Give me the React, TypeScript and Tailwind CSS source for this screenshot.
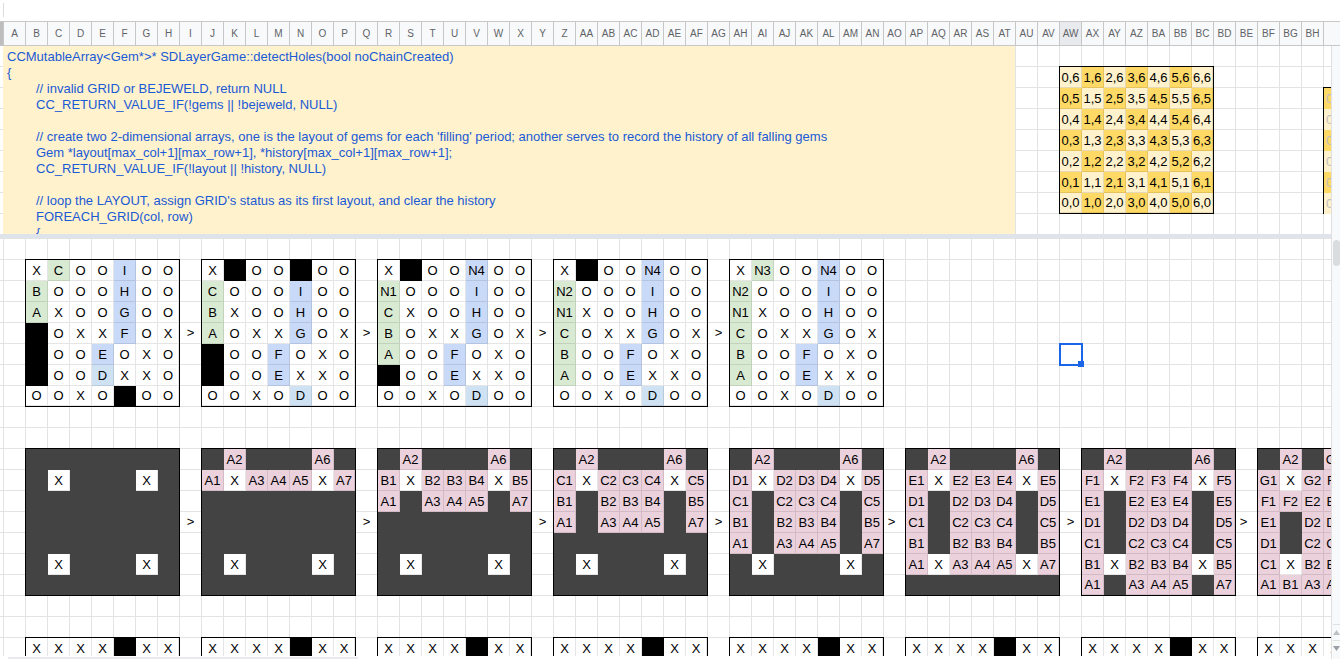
import React from "react";

const letters = "ABCDEFGHIJKLMNOPQRSTUVWXYZ";
const columns = [
  ...letters.split(""),
  ...letters.split("").map((l) => "A" + l),
  ..."ABCDEFGH".split("").map((l) => "B" + l),
];

const code = [
  { text: "CCMutableArray<Gem*>* SDLayerGame::detectHoles(bool noChainCreated)" },
  { text: "{" },
  { text: "// invalid GRID or BEJEWELD, return NULL", indent: true },
  { text: "CC_RETURN_VALUE_IF(!gems || !bejeweld, NULL)", indent: true },
  { text: "" },
  { text: "// create two 2-dimensional arrays, one is the layout of gems for each 'filling' period; another serves to record the history of all falling gems", indent: true },
  { text: "Gem *layout[max_col+1][max_row+1], *history[max_col+1][max_row+1];", indent: true },
  { text: "CC_RETURN_VALUE_IF(!layout || !history, NULL)", indent: true },
  { text: "" },
  { text: "// loop the LAYOUT, assign GRID's status as its first layout, and clear the history", indent: true },
  { text: "FOREACH_GRID(col, row)", indent: true },
  { text: "{", indent: true },
];

// token: "#" black, "." dark, "g:" green, "b:" blue, "l:" light blue, "p:" pink, "y:" gold, "c:" cream
const fills: Record<string, string> = {
  g: "bg-[#d9ead3]",
  b: "bg-[#c9daf8]",
  l: "bg-[#cfe2f3]",
  p: "bg-[#ead1dc]",
  y: "bg-[#ffd966]",
  c: "bg-[#fff2cc]",
};

const fallA = [
  "X g:C O O b:I O O",
  "g:B O O O b:H O O",
  "g:A X O O b:G O O",
  "# O X X b:F O X",
  "# O O b:E O X O",
  "# O O l:D X X O",
  "O O X O # O O",
];
const fallB = [
  "X # O O # O O",
  "g:C O O O b:I O O",
  "g:B X O O b:H O O",
  "g:A O X X b:G O X",
  "# O O b:F O X O",
  "# O O b:E X X O",
  "O O X O l:D O O",
];
const fallC = [
  "X # O O b:N4 O O",
  "g:N1 O O O b:I O O",
  "g:C X O O b:H O O",
  "g:B O X X b:G O X",
  "g:A O O b:F O X O",
  "# O O b:E X X O",
  "O O X O l:D O O",
];
const fallD = [
  "X # O O b:N4 O O",
  "g:N2 O O O b:I O O",
  "g:N1 X O O b:H O O",
  "g:C O X X b:G O X",
  "g:B O O b:F O X O",
  "g:A O O b:E X X O",
  "O O X O l:D O O",
];
const fallE = ["X g:N3 O O b:N4 O O", ...fallD.slice(1)];

const dark = ". . . . . . .";
const holes = ". X . . . X .";
const top = ". p:A2 . . . p:A6 .";
const row = (n: string, mid: string) => `p:${n}1 ${mid} p:${n}2 p:${n}3 p:${n}4 ${mid} p:${n}5`;
const base = (mid: string) => `p:A1 ${mid} p:A3 p:A4 p:A5 ${mid} p:A7`;

const fillA = [dark, holes, dark, dark, dark, holes, dark];
const fillB = [top, base("X"), dark, dark, dark, holes, dark];
const fillC = [top, row("B", "X"), base("."), dark, dark, holes, dark];
const fillD = [top, row("C", "X"), row("B", "."), base("."), dark, holes, dark];
const fillE = [top, row("D", "X"), row("C", "."), row("B", "."), base("."), holes, dark];
const fillF = [top, row("E", "X"), row("D", "."), row("C", "."), row("B", "."), base("X"), dark];
const fillG = [top, row("F", "X"), row("E", "."), row("D", "."), row("C", "."), row("B", "X"), base(".")];
const fillH = [
  ". p:A2 . p:G3 p:G4 p:A6 .",
  "p:G1 X p:G2 p:F3 p:F4 X p:G5",
  "p:F1 p:F2 p:E2 p:E3 p:E4 . p:F5",
  "p:E1 . p:D2 p:D3 p:D4 . p:E5",
  "p:D1 . p:C2 p:C3 p:C4 . p:D5",
  "p:C1 X p:B2 p:B3 p:B4 X p:C5",
  "p:A1 p:B1 p:A3 p:A4 p:A5 p:B5 p:A7",
];

const fallRow = [fallA, fallB, fallC, fallD, fallE];
const fillRow = [fillA, fillB, fillC, fillD, fillE, fillF, fillG, fillH];
const blocked = ["X X X X # X X"];

const coords = Array.from({ length: 7 }, (_, i) =>
  Array.from({ length: 7 }, (_, col) => `${(col + 6 - i) % 2 ? "y" : "c"}:${col},${6 - i}`).join(" ")
);

function Cell({ token }: { token: string }) {
  if (token === "#") return <div className="bg-black" />;
  if (token === ".") return <div className="bg-[#434343]" />;
  const tinted = token.includes(":");
  const fill = tinted ? fills[token[0]] : "bg-white";
  const label = tinted ? token.slice(2) : token;
  return (
    <div className={`flex items-center justify-center whitespace-nowrap border-r border-b border-black/10 pt-px ${fill}`}>
      {label}
    </div>
  );
}

function Board({ rows }: { rows: string[] }) {
  return (
    <div className="grid h-[148px] w-[155px] shrink-0 grid-cols-[repeat(6,22px)_21px] grid-rows-[repeat(6,21px)_20px] border border-black bg-white text-[13px] text-black">
      {rows.flatMap((r, y) => r.split(" ").map((t, x) => <Cell key={`${y}-${x}`} token={t} />))}
    </div>
  );
}

function Separator({ shifted }: { shifted?: boolean }) {
  return (
    <div
      className={`flex w-[21px] shrink-0 items-center justify-center text-[13px] text-black ${
        shifted ? "pr-[6px]" : ""
      }`}
    >
      {">"}
    </div>
  );
}

function BoardRow({ boards, shifted = [] }: { boards: string[][]; shifted?: number[] }) {
  return (
    <div className="flex">
      {boards.map((rows, i) => (
        <React.Fragment key={i}>
          {i > 0 && <Separator shifted={shifted.includes(i)} />}
          <Board rows={rows} />
        </React.Fragment>
      ))}
    </div>
  );
}

export default function App() {
  const gridLines =
    "bg-[linear-gradient(to_right,#e2e3e3_1px,transparent_1px),linear-gradient(to_bottom,#e2e3e3_1px,transparent_1px)] bg-[size:22px_21px]";

  return (
    <div className="flex h-[659px] w-[1340px] flex-col overflow-hidden bg-white font-['Liberation_Sans',Arial,sans-serif]">
      {/* Toolbar edge */}
      <div className="h-[21px] shrink-0 pl-[3px] pt-[3px]">
        <div className="h-[14px] w-px bg-[#dadce0]" />
      </div>

      {/* Column headers */}
      <div className="flex h-[25px] shrink-0 border-y border-[#c7c7c7] bg-[#f8f9fa]">
        <div className="w-[3px] shrink-0 bg-[#bdbdbd]" />
        {columns.map((name) => (
          <div
            key={name}
            className={`flex w-[22px] shrink-0 items-center justify-center border-l border-[#c7c7c7] text-[10px] text-[#5f6368] ${
              name === "AW" ? "bg-[#e8eaed]" : ""
            }`}
          >
            {name}
          </div>
        ))}
        <div className="flex-1 border-l border-[#c7c7c7]" />
      </div>

      <div className="flex min-h-0 flex-1">
        <div className="flex w-[1331px] shrink-0 flex-col">
          {/* Frozen rows */}
          <div className={`flex h-[188px] shrink-0 overflow-hidden pl-[3px] bg-[position:3px_-1px] ${gridLines}`}>
            <div className="h-full w-[1012px] shrink-0 overflow-hidden bg-[#fff2cc] px-[4px] pt-[3px] text-[13px] leading-[16px] text-[#1a5ad6]">
              {code.map((l, i) => (
                <div key={i} className={`h-[16px] whitespace-nowrap ${l.indent ? "pl-[29px]" : ""}`}>
                  {l.text}
                </div>
              ))}
            </div>
            <div className="ml-[44px] mt-[20px] shrink-0">
              <Board rows={coords} />
            </div>
            <div className="ml-[109px] mt-[41px] h-[127px] w-[20px] shrink-0 border-l border-t border-black">
              {["y", "c", "y", "c", "y", "c"].map((t, i) => (
                <div
                  key={i}
                  className={`flex h-[21px] items-center pl-[2px] text-[13px] text-[#bdbdbd] ${fills[t]}`}
                >
                  0
                </div>
              ))}
            </div>
          </div>

          {/* Freeze bar */}
          <div className="h-[4px] shrink-0 bg-[#dfe3ea]" />

          {/* Scrolling rows */}
          <div className={`relative min-h-0 flex-1 overflow-hidden bg-[position:3px_0] pl-[25px] pt-[21px] ${gridLines}`}>
            <div className="flex flex-col gap-[41px]">
              <BoardRow boards={fallRow} />
              <BoardRow boards={fillRow} shifted={[5, 7]} />
              <BoardRow boards={Array.from({ length: 8 }, () => blocked)} />
            </div>

            {/* Active cell */}
            <div className="absolute left-[1059px] top-[105px] h-[23px] w-[24px] border-2 border-[#1a65e8]" />
            <div className="absolute left-[1078px] top-[123px] h-[6px] w-[6px] bg-[#1a65e8]" />
          </div>

          {/* Horizontal scrollbar */}
          <div className="h-[3px] shrink-0 bg-white pl-[8px] pt-px">
            <div className="h-[2px] w-[350px] bg-[#e8eaed]" />
          </div>
        </div>

        {/* Vertical scrollbar */}
        <div className="flex min-w-0 flex-1 flex-col border-l border-[#e0e0e0] bg-[#f8f9fa] pl-px">
          <div className="mt-[194px] h-[26px] shrink-0 rounded-sm bg-[#dadce0]" />
          <div className="mt-auto flex h-[16px] shrink-0 items-center justify-center border-t border-[#e0e0e0]">
            <svg width="7" height="5" viewBox="0 0 7 5">
              <path d="M3.5 0 7 5H0z" fill="#bdc1c6" />
            </svg>
          </div>
          <div className="mb-[3px] flex h-[16px] shrink-0 items-center justify-center border-t border-[#e0e0e0]">
            <svg width="7" height="5" viewBox="0 0 7 5">
              <path d="M0 0h7L3.5 5z" fill="#9aa0a6" />
            </svg>
          </div>
        </div>
      </div>
    </div>
  );
}
